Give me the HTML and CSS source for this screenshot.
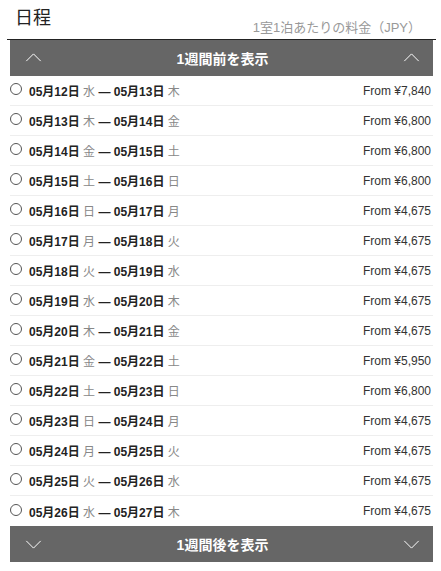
FILE: index.html
```html
<!DOCTYPE html>
<html lang="ja">
<head>
<meta charset="utf-8">
<link rel="stylesheet" href="styles.css">
</head>
<body>
<div class="wrap">
  <div class="head">
    <h1 class="title">日程</h1>
    <span class="note">1室1泊あたりの料金（JPY）</span>
  </div>
  <div class="bar bar-top">
    <svg class="chev" viewBox="0 0 18 10" width="17" height="9"><path d="M1 9 L9 1 L17 9" fill="none" stroke="#fff" stroke-width="1.1"/></svg>
    <span class="bar-label">1週間前を表示</span>
    <svg class="chev" viewBox="0 0 18 10" width="17" height="9"><path d="M1 9 L9 1 L17 9" fill="none" stroke="#fff" stroke-width="1.1"/></svg>
  </div>
  <ul class="list">
    <li class="row"><span class="radio"></span><span class="date">05月12日 <span class="wd">水</span> — 05月13日 <span class="wd">木</span></span><span class="price">From ¥7,840</span></li>
    <li class="row"><span class="radio"></span><span class="date">05月13日 <span class="wd">木</span> — 05月14日 <span class="wd">金</span></span><span class="price">From ¥6,800</span></li>
    <li class="row"><span class="radio"></span><span class="date">05月14日 <span class="wd">金</span> — 05月15日 <span class="wd">土</span></span><span class="price">From ¥6,800</span></li>
    <li class="row"><span class="radio"></span><span class="date">05月15日 <span class="wd">土</span> — 05月16日 <span class="wd">日</span></span><span class="price">From ¥6,800</span></li>
    <li class="row"><span class="radio"></span><span class="date">05月16日 <span class="wd">日</span> — 05月17日 <span class="wd">月</span></span><span class="price">From ¥4,675</span></li>
    <li class="row"><span class="radio"></span><span class="date">05月17日 <span class="wd">月</span> — 05月18日 <span class="wd">火</span></span><span class="price">From ¥4,675</span></li>
    <li class="row"><span class="radio"></span><span class="date">05月18日 <span class="wd">火</span> — 05月19日 <span class="wd">水</span></span><span class="price">From ¥4,675</span></li>
    <li class="row"><span class="radio"></span><span class="date">05月19日 <span class="wd">水</span> — 05月20日 <span class="wd">木</span></span><span class="price">From ¥4,675</span></li>
    <li class="row"><span class="radio"></span><span class="date">05月20日 <span class="wd">木</span> — 05月21日 <span class="wd">金</span></span><span class="price">From ¥4,675</span></li>
    <li class="row"><span class="radio"></span><span class="date">05月21日 <span class="wd">金</span> — 05月22日 <span class="wd">土</span></span><span class="price">From ¥5,950</span></li>
    <li class="row"><span class="radio"></span><span class="date">05月22日 <span class="wd">土</span> — 05月23日 <span class="wd">日</span></span><span class="price">From ¥6,800</span></li>
    <li class="row"><span class="radio"></span><span class="date">05月23日 <span class="wd">日</span> — 05月24日 <span class="wd">月</span></span><span class="price">From ¥4,675</span></li>
    <li class="row"><span class="radio"></span><span class="date">05月24日 <span class="wd">月</span> — 05月25日 <span class="wd">火</span></span><span class="price">From ¥4,675</span></li>
    <li class="row"><span class="radio"></span><span class="date">05月25日 <span class="wd">火</span> — 05月26日 <span class="wd">水</span></span><span class="price">From ¥4,675</span></li>
    <li class="row"><span class="radio"></span><span class="date">05月26日 <span class="wd">水</span> — 05月27日 <span class="wd">木</span></span><span class="price">From ¥4,675</span></li>
  </ul>
  <div class="bar bar-bottom">
    <svg class="chev" viewBox="0 0 18 10" width="17" height="9"><path d="M1 1 L9 9 L17 1" fill="none" stroke="#fff" stroke-width="1.1"/></svg>
    <span class="bar-label">1週間後を表示</span>
    <svg class="chev" viewBox="0 0 18 10" width="17" height="9"><path d="M1 1 L9 9 L17 1" fill="none" stroke="#fff" stroke-width="1.1"/></svg>
  </div>
</div>
</body>
</html>
```
FILE: styles.css
```css
* { box-sizing: border-box; }
html, body { margin: 0; padding: 0; background: #fff; }
body {
  font-family: "Liberation Sans", "Noto Sans CJK JP", sans-serif;
  color: #222;
}
.wrap {
  padding: 0 5px 0 7px;
}
.head {
  display: flex;
  justify-content: space-between;
  align-items: flex-end;
  height: 40px;
  padding: 0 15px 4px 8px;
  border-bottom: 1.5px solid #222;
}
.title {
  margin: 0;
  font-size: 18px;
  font-weight: normal;
  line-height: 24px;
  align-self: flex-start;
  margin-top: 6px;
  color: #222;
}
.note {
  font-size: 13px;
  color: #999;
  line-height: 15px;
}
.bar {
  display: flex;
  align-items: center;
  justify-content: space-between;
  height: 36px;
  margin: 0 3px;
  padding: 0 13px 0 15px;
  background: #666;
  color: #fff;
}
.bar-label {
  font-size: 14px;
  font-weight: bold;
}
.bar-top .chev { margin-top: -1px; }
.bar-bottom .chev { margin-top: 1px; }
.list {
  list-style: none;
  margin: 0 3px;
  padding: 0;
}
.row {
  display: flex;
  align-items: center;
  height: 30px;
  border-bottom: 1px solid #eee;
  font-size: 12px;
}
.row:last-child { border-bottom: none; }
.radio {
  width: 12px;
  height: 12px;
  border: 1px solid #555;
  border-radius: 50%;
  margin: -3px 7px 0 0;
  flex: none;
}
.date {
  font-weight: bold;
  color: #222;
  flex: 1;
}
.wd {
  font-weight: normal;
  color: #888;
}
.price {
  color: #333;
  padding-right: 2px;
}
```
